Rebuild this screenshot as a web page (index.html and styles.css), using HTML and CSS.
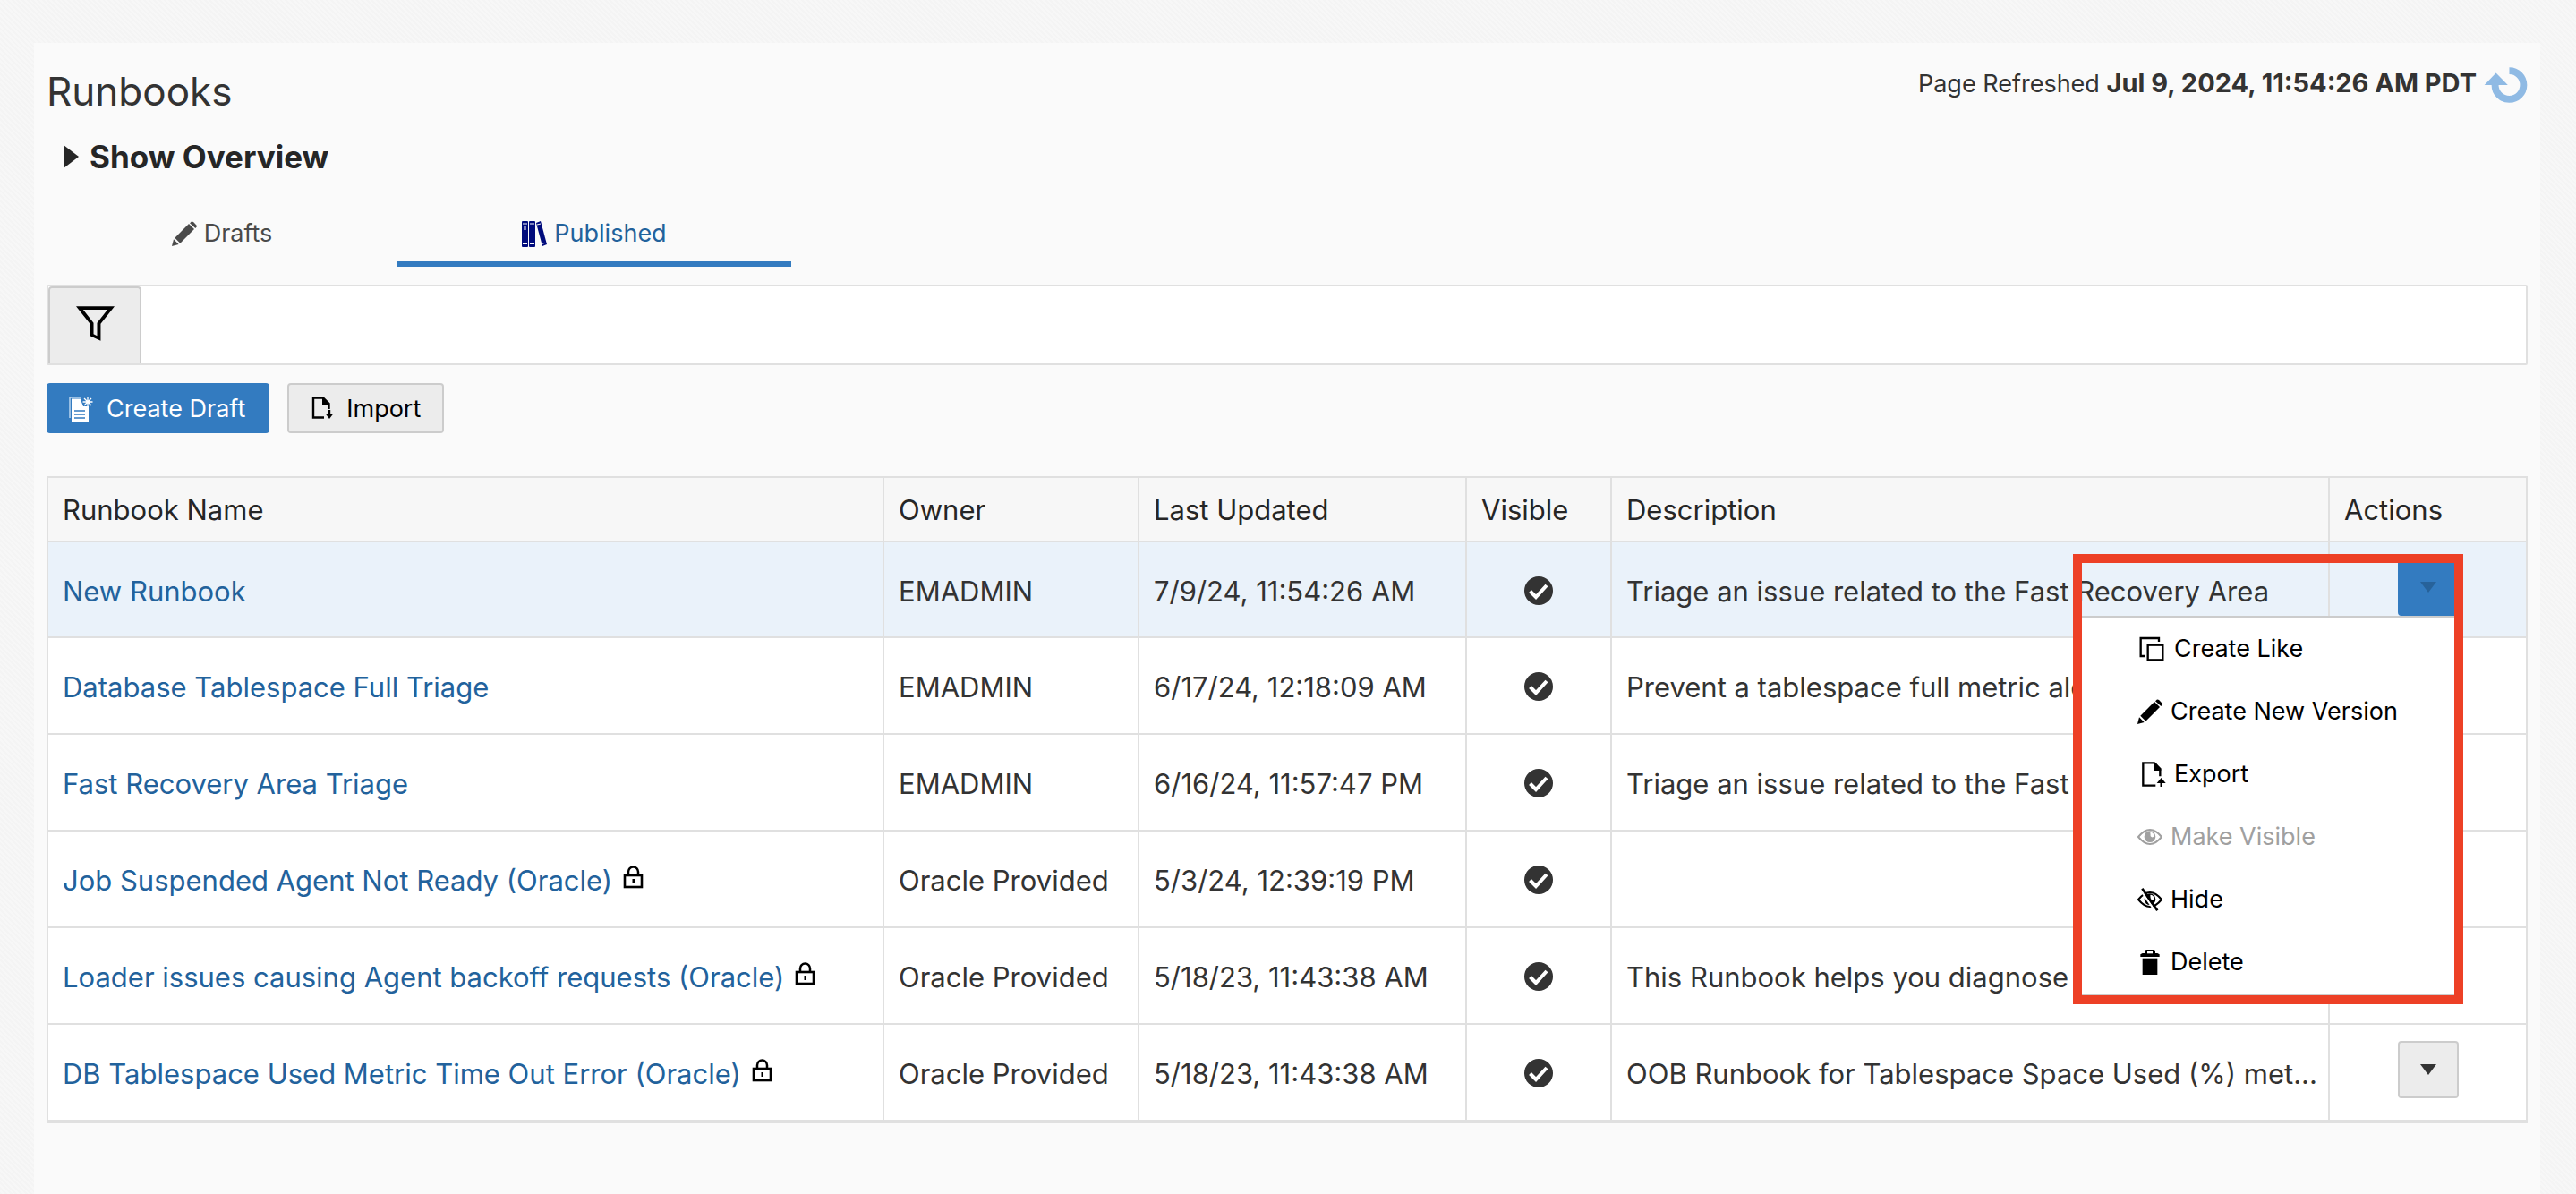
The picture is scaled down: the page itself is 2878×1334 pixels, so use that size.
FILE: index.html
```html
<!DOCTYPE html>
<html lang="en">
<head>
<meta charset="utf-8">
<meta name="viewport" content="width=device-width, initial-scale=1">
<title>Runbooks</title>
<link rel="stylesheet" href="styles.css">
</head>
<body>
<svg class="sprite" aria-hidden="true">
  <symbol id="i-pencil" viewBox="0 0 84 84">
    <path d="M0 84L6 61L23 78Z"/><path d="M10 56L57 9L75 27L28 74Z"/><path d="M62 5Q67 -1 73 4L80 11Q87 17 81 22L79 24L60 7Z"/>
  </symbol>
  <symbol id="i-lock" viewBox="0 0 24 27">
    <path d="M6 12V8a5.500 5.500 0 0 1 11 0V12" fill="none" stroke="currentColor" stroke-width="2.500"/>
    <rect x="2" y="12" width="19" height="13" fill="none" stroke="currentColor" stroke-width="2.600"/>
    <rect x="10.500" y="16" width="2.500" height="5"/>
  </symbol>
  <symbol id="i-check" viewBox="0 0 32 32">
    <circle cx="16" cy="16" r="16"/>
    <path d="M6.500 16.500L13 23L25 10" fill="none" stroke="#fff" stroke-width="4"/>
  </symbol>
  <symbol id="i-down" viewBox="0 0 18 12"><path d="M0 0H18L9 12Z"/></symbol>
</svg>

<main class="panel">
  <header class="head">
    <h1 class="title">Runbooks</h1>
    <div class="refreshed">
      <span>Page Refreshed <strong>Jul 9, 2024, 11:54:26 AM PDT</strong></span>
      <button class="refresh" type="button" aria-label="Refresh">
        <svg width="49" height="42" viewBox="40 44 148 126"><path d="M126 59A48 48 0 1 1 78 107" fill="none" stroke="currentColor" stroke-width="24"/><path d="M81 66L121 107H42Z"/></svg>
      </button>
    </div>
  </header>

  <button class="overview" type="button" aria-expanded="false">
    <svg width="17" height="26" viewBox="0 0 17 26"><path d="M0 0L17 13L0 26Z"/></svg>
    Show Overview
  </button>

  <div class="tabs" role="tablist">
    <button class="tab tab-drafts" type="button" role="tab" aria-selected="false">
      <svg width="28" height="28"><use href="#i-pencil"/></svg>
      Drafts
    </button>
    <button class="tab tab-published" type="button" role="tab" aria-selected="true">
      <svg class="books" width="28" height="29" viewBox="0 0 28 29">
        <rect width="7" height="29" rx="1"/><rect x="8" width="7" height="29" rx="1"/><path d="M16 2L21 0L28 26L23 28Z"/>
        <path d="M1 3H6M1 25.500H6M9 3H14M9 25.500H14M17 4L21 3M22 25.500L26 24.300" stroke="#fafafa" stroke-width="1"/>
        <rect x="2.500" y="5" width="2" height="5" fill="#fafafa"/>
      </svg>
      Published
    </button>
  </div>

  <form class="filter">
    <button class="filter-btn" type="button" aria-label="Filter">
      <svg width="43" height="39" viewBox="0 0 130 117"><path fill-rule="evenodd" d="M0 0H130L83 59V117L47 100V59ZM24 12L59 56V94L71 100V56L106 12Z"/></svg>
    </button>
    <input class="filter-input" type="text" aria-label="Filter runbooks">
  </form>

  <div class="toolbar">
    <button class="btn btn-primary" type="button">
      <svg width="28" height="29" viewBox="0 0 28 29">
        <path d="M1 24V1H13" fill="none" stroke="#b9d5ee" stroke-width="1.500"/>
        <path d="M3 2.500H14V6L16 11H22V29H3Z"/>
        <path d="M6 16H18M6 20H18M6 24H18" stroke="#337bc0" stroke-width="1.500"/>
        <path d="M21 0V12M15.500 6H26.500M17 2L25 10M25 2L17 10" stroke="#fff" stroke-width="1.300"/>
      </svg>
      Create Draft
    </button>
    <button class="btn btn-plain" type="button">
      <svg width="26" height="29" viewBox="0 0 26 29">
        <path d="M15 23.500H3V1.500H14L20.500 8V14" fill="none" stroke="currentColor" stroke-width="2.400"/>
        <path d="M13 2H15L21 8V10H13Z"/>
        <path d="M21 15V20" stroke="currentColor" stroke-width="2.400"/><path d="M16.500 19H25.500L21 25Z"/>
      </svg>
      Import
    </button>
  </div>

  <table class="grid">
    <colgroup><col><col class="c-owner"><col class="c-updated"><col class="c-visible"><col class="c-desc"><col class="c-actions"></colgroup>
    <thead>
      <tr><th>Runbook Name</th><th>Owner</th><th>Last Updated</th><th>Visible</th><th>Description</th><th>Actions</th></tr>
    </thead>
    <tbody>
      <tr class="selected">
        <td><a href="#">New Runbook</a></td>
        <td>EMADMIN</td>
        <td>7/9/24, 11:54:26 AM</td>
        <td class="vis"><svg width="32" height="32" role="img" aria-label="Visible"><use href="#i-check"/></svg></td>
        <td>Triage an issue related to the Fast Recovery Area</td>
        <td class="act">
          <div class="menu-anchor">
            <button class="more more-open" type="button" aria-label="Actions" aria-expanded="true"><svg width="18" height="12"><use href="#i-down"/></svg></button>
            <div class="callout">
              <div class="menu" role="menu">
                <button class="item" type="button" role="menuitem">
                  <svg width="32" height="28" viewBox="0 0 96 84"><path d="M26 66H11V6H72V18" fill="none" stroke="currentColor" stroke-width="7"/><rect x="35" y="29" width="50" height="50" fill="none" stroke="currentColor" stroke-width="7"/></svg>
                  Create Like
                </button>
                <button class="item" type="button" role="menuitem">
                  <svg width="28" height="28"><use href="#i-pencil"/></svg>
                  Create New Version
                </button>
                <button class="item" type="button" role="menuitem">
                  <svg width="32" height="28" viewBox="0 0 96 84"><path d="M61 80H19V4H56L76 24V49" fill="none" stroke="currentColor" stroke-width="7"/><path d="M54 2H60L79 23V30H54Z"/><path d="M80 84V62" stroke="currentColor" stroke-width="7"/><path d="M80 54L95 72H65Z"/></svg>
                  Export
                </button>
                <button class="item" type="button" role="menuitem" disabled>
                  <svg width="28" height="28" viewBox="0 0 84 84"><path d="M3 42Q42 -6 81 42Q42 90 3 42Z" fill="none" stroke="currentColor" stroke-width="6"/><circle cx="42" cy="41" r="19"/><path d="M43 26A13 13 0 0 1 56 40A7 7 0 0 1 44 40Z" fill="#fff"/></svg>
                  Make Visible
                </button>
                <button class="item" type="button" role="menuitem">
                  <svg width="28" height="28" viewBox="0 0 84 84"><path d="M3 42Q42 -6 81 42Q42 90 3 42Z" fill="none" stroke="currentColor" stroke-width="6"/><circle cx="42" cy="41" r="19"/><path d="M43 26A13 13 0 0 1 56 40A7 7 0 0 1 44 40Z" fill="#fff"/><path d="M9 8L60 82" stroke="#fff" stroke-width="7"/><path d="M16 5L67 79" stroke="currentColor" stroke-width="8"/></svg>
                  Hide
                </button>
                <button class="item" type="button" role="menuitem">
                  <svg width="28" height="28" viewBox="0 0 84 84"><path d="M17 29H67V84H17Z"/><path d="M10 24V16L17 12H24V6Q24 0 31 0H53Q60 0 60 6V12H67L74 16V24Z"/><rect x="33" y="6" width="18" height="7" fill="#fff"/></svg>
                  Delete
                </button>
              </div>
            </div>
          </div>
        </td>
      </tr>
      <tr>
        <td><a href="#">Database Tablespace Full Triage</a></td>
        <td>EMADMIN</td>
        <td>6/17/24, 12:18:09 AM</td>
        <td class="vis"><svg width="32" height="32" role="img" aria-label="Visible"><use href="#i-check"/></svg></td>
        <td>Prevent a tablespace full metric alert</td>
        <td class="act"><button class="more" type="button" aria-label="Actions"><svg width="18" height="12"><use href="#i-down"/></svg></button></td>
      </tr>
      <tr>
        <td><a href="#">Fast Recovery Area Triage</a></td>
        <td>EMADMIN</td>
        <td>6/16/24, 11:57:47 PM</td>
        <td class="vis"><svg width="32" height="32" role="img" aria-label="Visible"><use href="#i-check"/></svg></td>
        <td>Triage an issue related to the Fast</td>
        <td class="act"><button class="more" type="button" aria-label="Actions"><svg width="18" height="12"><use href="#i-down"/></svg></button></td>
      </tr>
      <tr>
        <td><a href="#">Job Suspended Agent Not Ready (Oracle)</a><svg class="lock" width="24" height="27" role="img" aria-label="Locked"><use href="#i-lock"/></svg></td>
        <td>Oracle Provided</td>
        <td>5/3/24, 12:39:19 PM</td>
        <td class="vis"><svg width="32" height="32" role="img" aria-label="Visible"><use href="#i-check"/></svg></td>
        <td></td>
        <td class="act"><button class="more" type="button" aria-label="Actions"><svg width="18" height="12"><use href="#i-down"/></svg></button></td>
      </tr>
      <tr>
        <td><a href="#">Loader issues causing Agent backoff requests (Oracle)</a><svg class="lock" width="24" height="27" role="img" aria-label="Locked"><use href="#i-lock"/></svg></td>
        <td>Oracle Provided</td>
        <td>5/18/23, 11:43:38 AM</td>
        <td class="vis"><svg width="32" height="32" role="img" aria-label="Visible"><use href="#i-check"/></svg></td>
        <td>This Runbook helps you diagnose</td>
        <td class="act"><button class="more" type="button" aria-label="Actions"><svg width="18" height="12"><use href="#i-down"/></svg></button></td>
      </tr>
      <tr>
        <td><a href="#">DB Tablespace Used Metric Time Out Error (Oracle)</a><svg class="lock" width="24" height="27" role="img" aria-label="Locked"><use href="#i-lock"/></svg></td>
        <td>Oracle Provided</td>
        <td>5/18/23, 11:43:38 AM</td>
        <td class="vis"><svg width="32" height="32" role="img" aria-label="Visible"><use href="#i-check"/></svg></td>
        <td>OOB Runbook for Tablespace Space Used (%) met...</td>
        <td class="act"><button class="more" type="button" aria-label="Actions"><svg width="18" height="12"><use href="#i-down"/></svg></button></td>
      </tr>
    </tbody>
  </table>
</main>
</body>
</html>
```
FILE: styles.css
```css
* { box-sizing: border-box; }

body {
  margin: 0;
  padding: 48px 40px 0 38px;
  background: repeating-linear-gradient(45deg, #f4f4f4 0 2px, #f7f7f7 2px 4px);
  color: #333;
  font: 400 27px/38px Inter, "Liberation Sans", sans-serif;
}

button, input { margin: 0; padding: 0; border: 0; background: none; color: inherit; font: inherit; }
svg { display: block; flex: none; fill: currentColor; }
.sprite { position: absolute; width: 0; height: 0; }

.panel {
  min-height: calc(100vh - 48px);
  padding: 26px 14px;
  background: #fafafa;
}

.head { display: flex; justify-content: space-between; align-items: flex-start; }
.title { margin: 0; font-size: 44px; font-weight: 400; line-height: 56px; }
.refreshed { display: flex; gap: 8px; }
.refreshed strong { font-size: 29px; font-weight: 700; }
.refresh { color: #8fbae4; }

.overview {
  display: flex;
  align-items: center;
  gap: 12px;
  margin-top: 23px;
  padding-left: 19px;
  color: #262626;
  font-size: 35px;
  font-weight: 700;
  line-height: 44px;
}

.tabs { display: flex; margin-top: 33px; }
.tab {
  display: flex;
  justify-content: center;
  align-items: center;
  gap: 8px;
  height: 68px;
  border-bottom: 6px solid transparent;
  color: #4a4a4a;
}
.tab-drafts { width: 392px; }
.tab-published { width: 440px; border-color: #337bc0; color: #22629c; }
.books { color: #000b7c; }

.filter {
  display: flex;
  height: 90px;
  margin-top: 20px;
  border: 2px solid #e0e0e0;
  border-radius: 2px;
  background: #fff;
}
.filter-btn {
  display: flex;
  justify-content: center;
  width: 104px;
  padding-top: 20px;
  border: 2px solid #ccc;
  border-bottom: 0;
  border-radius: 4px 4px 0 0;
  background: #ececec;
  color: #000;
}
.filter-input { flex: 1; padding: 0 16px; }

.toolbar { display: flex; gap: 20px; margin-top: 20px; }
.btn {
  display: flex;
  align-items: center;
  height: 56px;
  border-radius: 4px;
}
.btn-primary { gap: 14px; padding: 2px 27px 0 25px; background: #337bc0; color: #fff; }
.btn-plain { gap: 14px; padding: 2px 24px 0; border: 2px solid #ccc; background: #ececec; color: #000; }

.grid {
  width: 100%;
  margin-top: 48px;
  border: 2px solid #e0e0e0;
  border-width: 2px 0 2px 2px;
  border-spacing: 0;
  table-layout: fixed;
  background: #fff;
  font-size: 31px;
}
.c-owner { width: 285px; }
.c-updated { width: 366px; }
.c-visible { width: 162px; }
.c-desc { width: 802px; }
.c-actions { width: 221px; }

.grid th, .grid td {
  border: 0 solid #e0e0e0;
  border-width: 0 2px 2px 0;
  text-align: left;
  white-space: nowrap;
}
.grid th { height: 72px; padding: 2px 12px 0 16px; background: #f7f7f7; color: #262626; font-weight: 400; }
.grid td { height: 108px; padding: 4px 12px 0 16px; }
.grid .selected td { height: 107px; background: #eaf2fa; }
.grid a { color: #22629c; text-decoration: none; }
.lock { display: inline-block; margin-left: 12px; color: #000; vertical-align: 2px; }
.grid .vis { padding: 2px 0 0; }
.grid .vis svg { margin: 0 auto; }
.grid .act { padding: 18px 0 0 76px; vertical-align: top; }

.more {
  display: flex;
  justify-content: center;
  align-items: center;
  width: 68px;
  height: 64px;
  border: 2px solid #ccc;
  border-radius: 4px;
  background: #ececec;
}
.more-open { border-color: #337bc0; background: #337bc0; color: #27629a; }

.menu-anchor { position: relative; width: 68px; }
.callout {
  position: absolute;
  z-index: 2;
  top: -5px;
  right: -5px;
  width: 436px;
  padding-top: 59px;
  border: 10px solid #ed4026;
}
.menu {
  border: 2px solid #ccc;
  border-width: 2px 0;
  background: #fff;
  font-size: 27px;
}
.item {
  display: flex;
  align-items: center;
  gap: 9px;
  width: 100%;
  height: 70px;
  padding-left: 62px;
  color: #000;
}
.item:disabled { color: #a0a0a0; }
```
